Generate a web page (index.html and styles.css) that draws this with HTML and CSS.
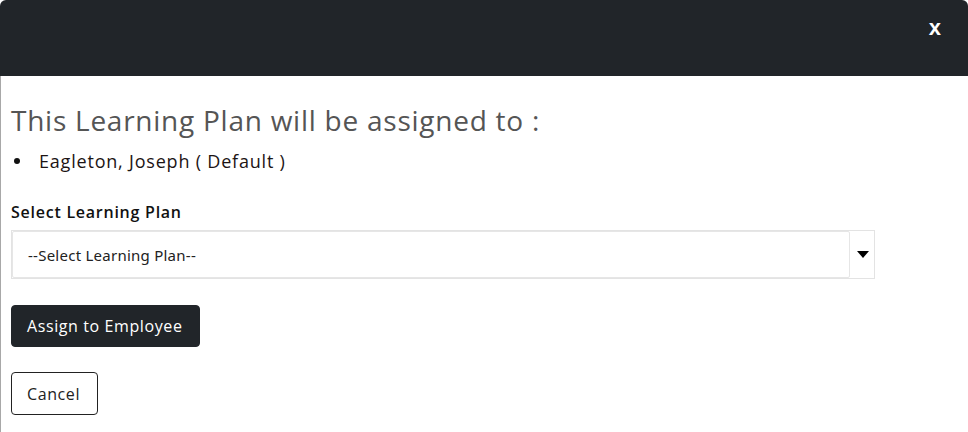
FILE: index.html
```html
<!DOCTYPE html>
<html>
<head>
<meta charset="utf-8">
<link rel="stylesheet" href="styles.css">
</head>
<body>
<div class="modal">
  <div class="modal-header">
    <span class="close">x</span>
  </div>
  <div class="modal-body">
    <h2 class="title">This Learning Plan will be assigned to :</h2>
    <ul class="assignees">
      <li>Eagleton, Joseph ( Default )</li>
    </ul>
    <label class="field-label">Select Learning Plan</label>
    <div class="select-wrap">
      <div class="select-box">--Select Learning Plan--</div>
      <div class="select-arrow"><span class="tri"></span></div>
    </div>
    <div class="actions">
      <button class="btn btn-dark">Assign to Employee</button>
      <button class="btn btn-outline">Cancel</button>
    </div>
  </div>
</div>
</body>
</html>
```

FILE: styles.css
```css
html, body {
  margin: 0;
  padding: 0;
  background: #ffffff;
  font-family: "Open Sans", "Noto Sans", sans-serif;
}
.modal {
  width: 968px;
  height: 432px;
  overflow: hidden;
}
.modal-header {
  height: 76px;
  background: #212529;
  border-radius: 6px 6px 0 0;
  display: flex;
  justify-content: flex-end;
  align-items: flex-start;
  padding: 0 27px 0 0;
  box-sizing: border-box;
}
.close {
  color: #ffffff;
  font-family: "Liberation Sans", Arial, sans-serif;
  font-weight: bold;
  font-size: 22px;
  line-height: 1;
  margin-top: 17px;
}
.modal-body {
  border-left: 1px solid #a8a8a8;
  height: 356px;
  padding-left: 10px;
  box-sizing: border-box;
}
.title {
  margin: 0;
  padding-top: 24px;
  font-weight: normal;
  font-size: 28px;
  line-height: 40px;
  color: #555555;
  letter-spacing: 0.75px;
}
.assignees {
  list-style: none;
  margin: 9px 0 0 0;
  padding-left: 3px;
  font-size: 18px;
  line-height: 24px;
  color: #1c1414;
  letter-spacing: 0.8px;
}
.assignees li {
  display: flex;
  align-items: center;
}
.assignees li::before {
  content: "";
  width: 6px;
  height: 6px;
  border-radius: 50%;
  background: #111;
  margin-right: 19px;
  flex: none;
}
.field-label {
  display: block;
  margin-top: 28px;
  font-weight: 600;
  font-size: 16px;
  line-height: 22px;
  color: #111;
  letter-spacing: 0.75px;
}
.select-wrap {
  margin-top: 7px;
  width: 864px;
  height: 49px;
  border: 1px solid #e3e3e3;
  box-sizing: border-box;
  display: flex;
}
.select-box {
  flex: 1;
  border: 1px solid #e6e6e6;
  border-radius: 2px;
  margin: 0;
  display: flex;
  align-items: center;
  padding-left: 15px;
  font-family: "Noto Sans", "Open Sans", sans-serif;
  font-size: 15px;
  letter-spacing: 0.25px;
  color: #222;
}
.select-arrow {
  width: 24px;
  display: flex;
  align-items: center;
  justify-content: center;
}
.tri {
  width: 0;
  height: 0;
  border-left: 6px solid transparent;
  border-right: 6px solid transparent;
  border-top: 7px solid #000;
  margin-left: 2px;
}
.actions {
  display: flex;
  flex-direction: column;
  align-items: flex-start;
  gap: 25px;
  margin-top: 26px;
}
.btn {
  font-family: "Open Sans", "Noto Sans", sans-serif;
  font-size: 16px;
  letter-spacing: 0.6px;
  white-space: nowrap;
  border-radius: 4px;
  padding: 0 15px;
  height: 42px;
  cursor: pointer;
  text-align: left;
}
.btn-dark {
  background: #212529;
  color: #ffffff;
  border: 1px solid #212529;
  width: 189px;
}
.btn-outline {
  background: #ffffff;
  color: #222;
  border: 1px solid #222;
  width: 87px;
  height: 43px;
}
```
